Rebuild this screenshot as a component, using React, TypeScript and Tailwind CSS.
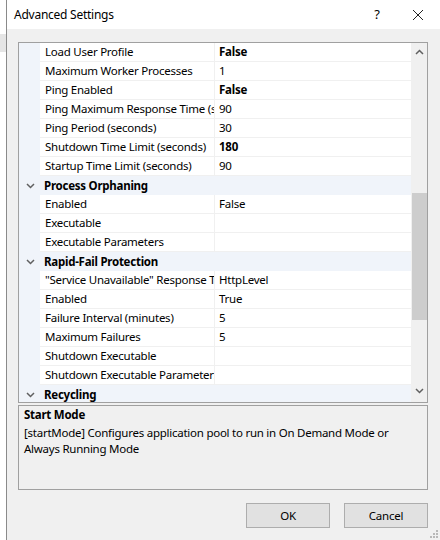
import React from 'react'

type Row =
  | { kind: 'cat'; label: string }
  | { kind: 'prop'; label: string; value?: string; bold?: boolean }

const rows: Row[] = [
  { kind: 'prop', label: 'Load User Profile', value: 'False', bold: true },
  { kind: 'prop', label: 'Maximum Worker Processes', value: '1' },
  { kind: 'prop', label: 'Ping Enabled', value: 'False', bold: true },
  { kind: 'prop', label: 'Ping Maximum Response Time (seconds)', value: '90' },
  { kind: 'prop', label: 'Ping Period (seconds)', value: '30' },
  { kind: 'prop', label: 'Shutdown Time Limit (seconds)', value: '180', bold: true },
  { kind: 'prop', label: 'Startup Time Limit (seconds)', value: '90' },
  { kind: 'cat', label: 'Process Orphaning' },
  { kind: 'prop', label: 'Enabled', value: 'False' },
  { kind: 'prop', label: 'Executable', value: '' },
  { kind: 'prop', label: 'Executable Parameters', value: '' },
  { kind: 'cat', label: 'Rapid-Fail Protection' },
  { kind: 'prop', label: '"Service Unavailable" Response Type', value: 'HttpLevel' },
  { kind: 'prop', label: 'Enabled', value: 'True' },
  { kind: 'prop', label: 'Failure Interval (minutes)', value: '5' },
  { kind: 'prop', label: 'Maximum Failures', value: '5' },
  { kind: 'prop', label: 'Shutdown Executable', value: '' },
  { kind: 'prop', label: 'Shutdown Executable Parameters', value: '' },
  { kind: 'cat', label: 'Recycling' },
]

function Chevron({ up = false, className = '' }: { up?: boolean; className?: string }) {
  return (
    <svg width="9" height="6" viewBox="0 0 9 6" className={className}>
      <path
        d={up ? 'M1 5 L4.5 1.5 L8 5' : 'M1 1 L4.5 4.5 L8 1'}
        fill="none"
        stroke="#606060"
        strokeWidth="1.5"
      />
    </svg>
  )
}

function GridRow({ row }: { row: Row }) {
  if (row.kind === 'cat') {
    return (
      <div className="flex h-[19px] bg-[#f0f4fa] shrink-0">
        <div className="w-[21px] flex items-center justify-center pl-[1px]">
          <Chevron />
        </div>
        <div className="flex-1 pl-[4px] flex items-center font-bold text-black">{row.label}</div>
      </div>
    )
  }
  return (
    <div className="flex h-[19px] shrink-0">
      <div className="w-[21px] bg-[#f0f4fa]" />
      <div className="w-[175px] bg-white border-b border-[#f0f0f0] border-r pl-[5px] flex items-center overflow-hidden whitespace-nowrap">
        {row.label}
      </div>
      <div
        className={`flex-1 bg-white border-b border-[#f0f0f0] pl-[4px] flex items-center whitespace-nowrap overflow-hidden ${
          row.bold ? 'font-bold' : ''
        }`}
      >
        {row.value}
      </div>
    </div>
  )
}

export default function App() {
  return (
    <div
      className="w-[440px] h-[540px] bg-white flex overflow-hidden text-[11.5px] tracking-[-0.25px] text-black"
      style={{ fontFamily: '"Noto Sans", "Liberation Sans", sans-serif' }}
    >
      {/* desktop strip behind the dialog */}
      <div className="w-[6px] shrink-0">
        <div className="mt-[34px] h-[18px] bg-[#e5e5e5]" />
      </div>

      {/* dialog window */}
      <div className="flex-1 border-l border-[#8a8a8a] flex flex-col">
        <div className="h-[29px] bg-white flex items-center pl-[7px] shrink-0">
          <span className="flex-1 text-[12px]">Advanced Settings</span>
          <span className="w-[30px] text-center mr-[20px] text-[13px]">?</span>
          <svg width="12" height="12" viewBox="0 0 12 12" className="mr-[16px]">
            <path d="M1 1 L11 11 M11 1 L1 11" stroke="#222" strokeWidth="1" />
          </svg>
        </div>

        <div className="flex-1 bg-[#f0f0f0] pl-[11px] pr-[12px] pt-[13px] flex flex-col relative">
          {/* property grid */}
          <div className="h-[361px] border border-[#a0a0a0] bg-[#f0f0f0] flex overflow-hidden shrink-0">
            <div className="flex-1 flex flex-col overflow-hidden">
              {rows.map((r, i) => (
                <GridRow key={i} row={r} />
              ))}
            </div>
            <div className="w-[16px] bg-[#f0f0f0] flex flex-col items-center">
              <div className="h-[18px] flex items-center justify-center">
                <Chevron up />
              </div>
              <div className="mt-[132px] w-[15px] h-[127px] bg-[#cdcdcd]" />
              <div className="flex-1" />
              <div className="h-[18px] flex items-center justify-center mb-[2px]">
                <Chevron />
              </div>
            </div>
          </div>

          {/* description panel */}
          <div className="mt-[2px] h-[85px] border border-[#a0a0a0] bg-[#f0f0f0] px-[5px] pt-[1px] leading-[16px] shrink-0">
            <div className="font-bold mb-[2px]">Start Mode</div>
            <div>[startMode] Configures application pool to run in On Demand Mode or Always Running Mode</div>
          </div>

          {/* buttons */}
          <div className="flex justify-end gap-[14px] mt-[13px]">
            <button className="w-[84px] h-[25px] bg-[#e1e1e1] border border-[#adadad]">OK</button>
            <button className="w-[84px] h-[25px] bg-[#e1e1e1] border border-[#adadad]">Cancel</button>
          </div>

          {/* resize grip */}
          <div className="absolute right-[2px] bottom-[2px] grid grid-cols-3 gap-[1px]">
            {[0, 0, 1, 0, 1, 1, 1, 1, 1].map((v, i) => (
              <div key={i} className={`w-[2px] h-[2px] ${v ? 'bg-[#b8b8b8]' : ''}`} />
            ))}
          </div>
        </div>
      </div>
    </div>
  )
}
